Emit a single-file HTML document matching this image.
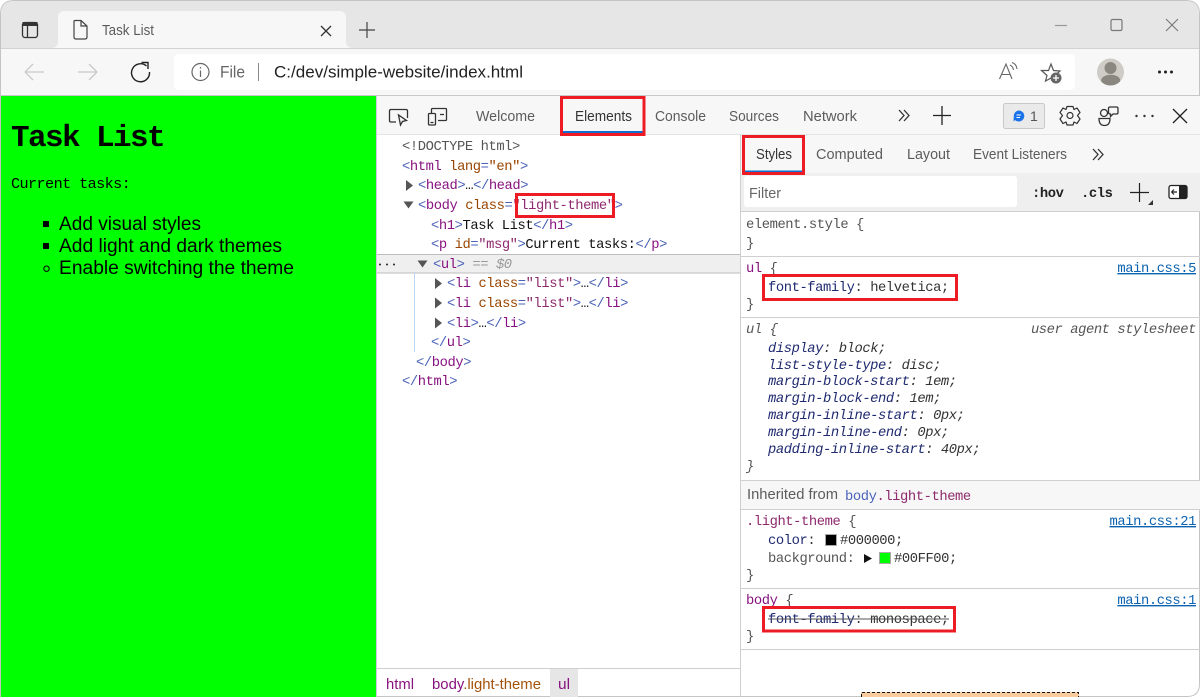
<!DOCTYPE html>
<html lang="en"><head><meta charset="utf-8"><title>Task List</title>
<style>
html,body{margin:0;padding:0;background:#fff;overflow:hidden;width:1200px;height:697px}
svg{display:block}
text{white-space:pre}
.s{font-family:"Liberation Sans",sans-serif;font-size:14.6px;fill:#5c5c5c}
.m{font-family:"Liberation Mono",monospace;font-size:13.8px;letter-spacing:-0.42px;fill:#333}
.t{fill:#881280}.b{fill:#4a62b8}.a{fill:#994500}.v{fill:#8f2a6e}.p{fill:#1f2a70}.g{fill:#555}.k{fill:#111}
.i{font-style:italic}
.l{fill:#0b62b0;text-decoration:underline}
.ic{fill:none;stroke:#333;stroke-width:1.3}
.r{fill:none;stroke:#ed1c24;stroke-width:3}
</style></head><body>
<svg width="1200" height="697" viewBox="0 0 1200 697" xmlns="http://www.w3.org/2000/svg">
<defs><clipPath id="av"><circle cx="1110.500" cy="72" r="13.500"/></clipPath></defs>
<!-- window -->
<path d="M0.5 697V14Q0.5 0.5 14 0.5H1186Q1199.5 0.5 1199.5 14V684Q1199.5 696.5 1187 696.5H0.5Z" fill="#fff" stroke="#c4c4c4"/>
<path d="M1 48V14Q1 1 14 1H1186Q1199 1 1199 14V48Z" fill="#e6e6e6"/>
<rect x="1" y="48" width="1198" height="1" fill="#d2d2d2"/>
<rect x="1" y="49" width="1198" height="46" fill="#f7f7f7"/>
<rect x="0" y="95" width="1200" height="1" fill="#c8c8c8"/>
<!-- tab -->
<path d="M51 48Q58 48 58 41V18Q58 11 65 11H339Q346 11 346 18V41Q346 48 353 48Z" fill="#f7f7f7"/>
<!-- tab strip icon -->
<rect x="22.5" y="22.5" width="15" height="15" rx="2.5" class="ic"/>
<rect x="22.5" y="22" width="15" height="4" fill="#333"/>
<path d="M27.5 26V37" class="ic"/>
<path d="M74 21.5Q74 20.5 75 20.5H81L87 26V37Q87 39 85 39H76Q74 39 74 37ZM81 20.5V26H87" fill="none" stroke="#444" stroke-width="1.2"/>
<text x="102" y="35" class="s" textLength="52" lengthAdjust="spacingAndGlyphs">Task List</text>
<path d="M321 26L331 36M331 26L321 36" class="ic"/>
<path d="M359 30H375M367 22V38" fill="none" stroke="#444" stroke-width="1.2"/>
<!-- window controls -->
<path d="M1055 25.5H1067" stroke="#999" stroke-width="1.2" fill="none"/>
<rect x="1111" y="19.5" width="11" height="11" rx="1.5" fill="none" stroke="#777" stroke-width="1.2"/>
<path d="M1166 19L1178 31M1178 19L1166 31" stroke="#777" stroke-width="1.1" fill="none"/>
<!-- toolbar -->
<path d="M25 72H44M25 72L33 64M25 72L33 80" stroke="#c9c9c9" stroke-width="1.3" fill="none"/>
<path d="M78 72H97M97 72L89 64M97 72L89 80" stroke="#c9c9c9" stroke-width="1.3" fill="none"/>
<path d="M146.5 66A9 9 0 1 0 149.5 72" fill="none" stroke="#222" stroke-width="1.4"/>
<path d="M141.500 62.500H148V69" fill="none" stroke="#222" stroke-width="1.4"/>
<rect x="174" y="54" width="901" height="36" rx="5" fill="#fff"/>
<circle cx="200.500" cy="72" r="8.500" fill="none" stroke="#666" stroke-width="1.200"/>
<path d="M200.500 70.500V77M200.500 67V68.500" stroke="#666" stroke-width="1.200" fill="none"/>
<text x="220" y="77.500" class="s" style="fill:#666;font-size:16.500px" textLength="25" lengthAdjust="spacingAndGlyphs">File</text>
<rect x="258" y="63" width="1" height="18" fill="#888"/>
<text x="274" y="77.500" class="s" style="fill:#222;font-size:16.500px" textLength="249" lengthAdjust="spacingAndGlyphs">C:/dev/simple-website/index.html</text>
<path d="M999.500 79L1006 64L1012 79M1001.500 74.500H1010.500" fill="none" stroke="#666" stroke-width="1.100"/>
<path d="M1010 65Q1013 66.500 1013.500 70M1012 62.500Q1016.500 64 1017 69" fill="none" stroke="#666" stroke-width="1.100"/>
<path d="M1051 64L1053.500 70.500L1060 71L1055 75.500L1056.500 81L1051 78L1045.500 81L1047 75.500L1041.500 70.500L1048.500 70.500Z" fill="none" stroke="#555" stroke-width="1.200"/>
<circle cx="1056" cy="78" r="5.500" fill="#666"/>
<path d="M1053 78H1059M1056 75V81" stroke="#fff" stroke-width="1.300"/>
<circle cx="1110.500" cy="72" r="13.500" fill="#cfccc7"/>
<circle cx="1110.500" cy="68" r="6" fill="#8a8680"/>
<ellipse cx="1110.700" cy="80.500" rx="9.500" ry="5.800" fill="#8a8680" clip-path="url(#av)"/>
<circle cx="1159.500" cy="72" r="1.500" fill="#222"/><circle cx="1165.500" cy="72" r="1.500" fill="#222"/><circle cx="1171.500" cy="72" r="1.500" fill="#222"/>
<!-- page -->
<rect x="1" y="96" width="375" height="601" fill="#00ff00"/>
<text x="11" y="146" style="font-family:'Liberation Mono',monospace;font-weight:bold;font-size:31px;letter-spacing:-1.600px;fill:#000">Task List</text>
<text x="11" y="188" style="font-family:'Liberation Mono',monospace;font-size:15.200px;letter-spacing:-0.600px;fill:#000">Current tasks:</text>
<g style="font-family:'Liberation Sans',sans-serif;font-size:19.3px;fill:#000">
<text x="59" y="230" textLength="142" lengthAdjust="spacingAndGlyphs">Add visual styles</text>
<text x="59" y="252" textLength="223" lengthAdjust="spacingAndGlyphs">Add light and dark themes</text>
<text x="59" y="274" textLength="235" lengthAdjust="spacingAndGlyphs">Enable switching the theme</text>
</g>
<rect x="43" y="221" width="6" height="6" fill="#000"/>
<rect x="43" y="243" width="6" height="6" fill="#000"/>
<circle cx="46.500" cy="268.700" r="2.700" fill="none" stroke="#000" stroke-width="1"/>
<!-- devtools -->
<rect x="376" y="96" width="1" height="601" fill="#d9c6e2"/>
<rect x="377" y="96" width="823" height="38" fill="#f7f7f7"/>
<rect x="377" y="134" width="823" height="1" fill="#e4e4e4"/>
<!-- inspect/device icons -->
<path d="M396 122H391Q389.500 122 389.500 120.500V111Q389.500 109.500 391 109.500H406Q407.500 109.500 407.500 111V118" class="ic"/>
<path d="M398.500 115L400.500 125L402.500 121.500L406.500 120.500Z" class="ic"/>
<rect x="428.500" y="113.500" width="7" height="11.500" rx="1" class="ic"/>
<path d="M431.500 113V109.500Q431.500 108.500 432.500 108.500H445.500Q446.500 108.500 446.500 109.500V119.500Q446.500 120.500 445.500 120.500H438M440 114.500H444M430.500 122.500H433.500" class="ic"/>
<text x="476" y="121" class="s" textLength="59" lengthAdjust="spacingAndGlyphs">Welcome</text>
<text x="575" y="121" class="s" style="fill:#333" textLength="57" lengthAdjust="spacingAndGlyphs">Elements</text>
<text x="655" y="121" class="s" textLength="51" lengthAdjust="spacingAndGlyphs">Console</text>
<text x="729" y="121" class="s" textLength="50" lengthAdjust="spacingAndGlyphs">Sources</text>
<text x="803" y="121" class="s" textLength="54" lengthAdjust="spacingAndGlyphs">Network</text>
<rect x="563" y="131" width="80" height="2" fill="#0f6cd0"/>
<path d="M899 110L904 115.500L899 121M904 110L909 115.500L904 121" class="ic"/>
<path d="M933 115.500H951M942 106V125" fill="none" stroke="#222" stroke-width="1.300"/>
<rect x="1003.500" y="103.500" width="41" height="25" rx="2" fill="#eaeaea" stroke="#c8c8c8"/>
<path d="M1019 110.500A5.500 5.500 0 1 1 1015 120L1013.500 121.500L1013.800 116.500A5.500 5.500 0 0 1 1019 110.500Z" fill="#1a73e8"/>
<path d="M1016.500 115H1021M1016.500 117.500H1020" stroke="#fff" stroke-width="1"/>
<text x="1030" y="121" class="s" style="font-size:14px;fill:#555">1</text>
<path d="M1067 106.500H1073L1074 109.500L1077 108L1080 112.500L1077.500 115.500L1080 119L1077 123.500L1074 122L1073 125H1067L1066 122L1063 123.500L1060 119L1062.500 115.500L1060 112.500L1063 108L1066 109.500Z" fill="none" stroke="#333" stroke-width="1.200" stroke-linejoin="round"/>
<circle cx="1070" cy="115.500" r="3" fill="none" stroke="#333" stroke-width="1.200"/>
<circle cx="1104" cy="113" r="3.500" class="ic"/>
<path d="M1099 118.500H1110Q1110 125.500 1104.500 125.500Q1099 125.500 1099 118.500Z" class="ic"/>
<path d="M1110 107H1116.500Q1118 107 1118 108.500V112.500Q1118 114 1116.500 114H1113L1110.500 116.500V114Q1108.500 114 1108.500 112.500V108.500Q1108.500 107 1110 107Z" class="ic"/>
<circle cx="1136.500" cy="116" r="1.200" fill="#333"/><circle cx="1144.500" cy="116" r="1.200" fill="#333"/><circle cx="1152.500" cy="116" r="1.200" fill="#333"/>
<path d="M1173 109L1187 123M1187 109L1173 123" fill="none" stroke="#222" stroke-width="1.300"/>
<!-- elements panel -->
<rect x="740" y="135" width="1" height="562" fill="#cfcfcf"/>
<text x="402" y="150" class="m g">&lt;!DOCTYPE html&gt;</text>
<text x="402" y="170" class="m"><tspan class="b">&lt;</tspan><tspan class="t">html</tspan> <tspan class="a">lang</tspan><tspan class="b">=</tspan><tspan class="a">"en"</tspan><tspan class="b">&gt;</tspan></text>
<path d="M406 180L413 185.500L406 191Z" fill="#555"/>
<text x="418" y="189" class="m"><tspan class="b">&lt;</tspan><tspan class="t">head</tspan><tspan class="b">&gt;</tspan><tspan class="k">…</tspan><tspan class="b">&lt;/</tspan><tspan class="t">head</tspan><tspan class="b">&gt;</tspan></text>
<path d="M403.500 201.500L413.500 201.500L408.500 208.500Z" fill="#555"/>
<text x="418" y="209" class="m"><tspan class="b">&lt;</tspan><tspan class="t">body</tspan> <tspan class="a">class</tspan><tspan class="b">=</tspan><tspan class="v">"light-theme"</tspan><tspan class="b">&gt;</tspan></text>
<text x="431" y="229" class="m"><tspan class="b">&lt;</tspan><tspan class="t">h1</tspan><tspan class="b">&gt;</tspan><tspan class="k">Task List</tspan><tspan class="b">&lt;/</tspan><tspan class="t">h1</tspan><tspan class="b">&gt;</tspan></text>
<text x="431" y="248" class="m"><tspan class="b">&lt;</tspan><tspan class="t">p</tspan> <tspan class="a">id</tspan><tspan class="b">=</tspan><tspan class="v">"msg"</tspan><tspan class="b">&gt;</tspan><tspan class="k">Current tasks:</tspan><tspan class="b">&lt;/</tspan><tspan class="t">p</tspan><tspan class="b">&gt;</tspan></text>
<rect x="377" y="255" width="363" height="18" fill="#efefef"/>
<rect x="377" y="254" width="363" height="1" fill="#bdbdbd"/>
<rect x="377" y="272.500" width="363" height="1" fill="#bdbdbd"/>
<circle cx="380" cy="264.500" r="1" fill="#222"/><circle cx="387" cy="264.500" r="1" fill="#222"/><circle cx="394" cy="264.500" r="1" fill="#222"/>
<path d="M417.500 260.500L427.500 260.500L422.500 267.500Z" fill="#555"/>
<text x="433" y="268" class="m"><tspan class="b">&lt;</tspan><tspan class="t">ul</tspan><tspan class="b">&gt;</tspan> <tspan class="i" style="fill:#999">== $0</tspan></text>
<rect x="414" y="273" width="1" height="79" fill="#b9d5f2"/>
<path d="M435 278L442 283.500L435 289Z" fill="#555"/>
<text x="447" y="287" class="m"><tspan class="b">&lt;</tspan><tspan class="t">li</tspan> <tspan class="a">class</tspan><tspan class="b">=</tspan><tspan class="v">"list"</tspan><tspan class="b">&gt;</tspan><tspan class="k">…</tspan><tspan class="b">&lt;/</tspan><tspan class="t">li</tspan><tspan class="b">&gt;</tspan></text>
<path d="M435 297.500L442 303L435 308.500Z" fill="#555"/>
<text x="447" y="307" class="m"><tspan class="b">&lt;</tspan><tspan class="t">li</tspan> <tspan class="a">class</tspan><tspan class="b">=</tspan><tspan class="v">"list"</tspan><tspan class="b">&gt;</tspan><tspan class="k">…</tspan><tspan class="b">&lt;/</tspan><tspan class="t">li</tspan><tspan class="b">&gt;</tspan></text>
<path d="M435 317.500L442 323L435 328.500Z" fill="#555"/>
<text x="447" y="327" class="m"><tspan class="b">&lt;</tspan><tspan class="t">li</tspan><tspan class="b">&gt;</tspan><tspan class="k">…</tspan><tspan class="b">&lt;/</tspan><tspan class="t">li</tspan><tspan class="b">&gt;</tspan></text>
<text x="431" y="346" class="m"><tspan class="b">&lt;/</tspan><tspan class="t">ul</tspan><tspan class="b">&gt;</tspan></text>
<text x="416" y="366" class="m"><tspan class="b">&lt;/</tspan><tspan class="t">body</tspan><tspan class="b">&gt;</tspan></text>
<text x="402" y="385" class="m"><tspan class="b">&lt;/</tspan><tspan class="t">html</tspan><tspan class="b">&gt;</tspan></text>
<!-- breadcrumb -->
<rect x="377" y="668" width="363" height="1" fill="#cfcfcf"/>
<rect x="550" y="669" width="28" height="28" fill="#e6e6e6"/>
<text x="386" y="689" class="s t" textLength="28" lengthAdjust="spacingAndGlyphs">html</text>
<text x="432" y="689" class="s" style="fill:#a5520a" textLength="109" lengthAdjust="spacingAndGlyphs"><tspan class="t">body</tspan>.light-theme</text>
<text x="558" y="689" class="s t" textLength="12" lengthAdjust="spacingAndGlyphs">ul</text>
<!-- styles -->
<rect x="741" y="135" width="459" height="38" fill="#f7f7f7"/>
<rect x="741" y="173" width="459" height="38" fill="#efefef"/>
<text x="756" y="159" class="s" style="fill:#333" textLength="36" lengthAdjust="spacingAndGlyphs">Styles</text>
<text x="816" y="159" class="s" textLength="67" lengthAdjust="spacingAndGlyphs">Computed</text>
<text x="907" y="159" class="s" textLength="43" lengthAdjust="spacingAndGlyphs">Layout</text>
<text x="973" y="159" class="s" textLength="94" lengthAdjust="spacingAndGlyphs">Event Listeners</text>
<rect x="745" y="170.500" width="57" height="2" fill="#0f6cd0"/>
<path d="M1093 149L1098 154.500L1093 160M1098 149L1103 154.500L1098 160" class="ic"/>
<rect x="744" y="176" width="273" height="31" rx="3" fill="#fff"/>
<text x="749" y="198" class="s" style="fill:#666" textLength="32" lengthAdjust="spacingAndGlyphs">Filter</text>
<text x="1032" y="197" class="m" style="font-weight:bold;fill:#222">:hov</text>
<text x="1081" y="197" class="m" style="font-weight:bold;fill:#222">.cls</text>
<path d="M1130 192.500H1149M1139.500 183V202" fill="none" stroke="#222" stroke-width="1.200"/>
<path d="M1153 200V205H1148Z" fill="#333"/>
<rect x="1169" y="185.500" width="18" height="13" rx="2" fill="#fff" stroke="#222" stroke-width="1.300"/>
<rect x="1179" y="185.500" width="8" height="13" fill="#222"/>
<path d="M1171.500 192H1177M1171.500 192L1174 189.500M1171.500 192L1174 194.500" stroke="#222" stroke-width="1.200" fill="none"/>
<rect x="741" y="211" width="459" height="1" fill="#cfcfcf"/>
<text x="746" y="228" class="m g">element.style {</text>
<text x="746" y="247" class="m g">}</text>
<rect x="741" y="256" width="459" height="1" fill="#cfcfcf"/>
<text x="746" y="272" class="m g"><tspan class="t">ul</tspan> {</text>
<text x="1196" y="272" class="m l" text-anchor="end">main.css:5</text>
<text x="768" y="291" class="m"><tspan class="p">font-family</tspan>: helvetica;</text>
<text x="746" y="308" class="m g">}</text>
<rect x="741" y="317" width="459" height="1" fill="#cfcfcf"/>
<text x="746" y="333" class="m g i">ul {</text>
<text x="1196" y="333" class="m g i" text-anchor="end">user agent stylesheet</text>
<text x="768" y="352" class="m i"><tspan class="p">display</tspan>: block;</text>
<text x="768" y="369" class="m i"><tspan class="p">list-style-type</tspan>: disc;</text>
<text x="768" y="385" class="m i"><tspan class="p">margin-block-start</tspan>: 1em;</text>
<text x="768" y="402" class="m i"><tspan class="p">margin-block-end</tspan>: 1em;</text>
<text x="768" y="419" class="m i"><tspan class="p">margin-inline-start</tspan>: 0px;</text>
<text x="768" y="436" class="m i"><tspan class="p">margin-inline-end</tspan>: 0px;</text>
<text x="768" y="453" class="m i"><tspan class="p">padding-inline-start</tspan>: 40px;</text>
<text x="746" y="470" class="m g i">}</text>
<rect x="741" y="480" width="459" height="1" fill="#cfcfcf"/>
<rect x="741" y="481" width="459" height="28" fill="#f7f7f7"/>
<text x="747" y="499" class="s" textLength="91" lengthAdjust="spacingAndGlyphs">Inherited from</text>
<text x="845" y="500" class="m"><tspan class="b">body</tspan><tspan class="v">.light-theme</tspan></text>
<rect x="741" y="509" width="459" height="1" fill="#cfcfcf"/>
<text x="746" y="525" class="m g"><tspan class="v">.light-theme</tspan> {</text>
<text x="1196" y="525" class="m l" text-anchor="end">main.css:21</text>
<text x="768" y="544" class="m"><tspan class="p">color</tspan>:</text>
<rect x="825.500" y="534.500" width="11" height="11" fill="#000" stroke="#aaa"/>
<text x="840" y="544" class="m">#000000;</text>
<text x="768" y="562" class="m g">background:</text>
<path d="M864 554L872 558.500L864 563Z" fill="#111"/>
<rect x="879.500" y="552.500" width="11" height="11" fill="#00ff00" stroke="#aaa"/>
<text x="894" y="562" class="m">#00FF00;</text>
<text x="746" y="579" class="m g">}</text>
<rect x="741" y="588" width="459" height="1" fill="#cfcfcf"/>
<text x="746" y="604" class="m g"><tspan class="t">body</tspan> {</text>
<text x="1196" y="604" class="m l" text-anchor="end">main.css:1</text>
<text x="768" y="623" class="m"><tspan class="p">font-family</tspan>: monospace;</text>
<rect x="768" y="618.500" width="181" height="1" fill="#555"/>
<text x="746" y="640" class="m g">}</text>
<rect x="741" y="649" width="459" height="1" fill="#cfcfcf"/>
<rect x="861" y="692" width="218" height="5" fill="#f9cc9d"/>
<path d="M861.500 697V692.500H1078.500V697" fill="none" stroke="#111" stroke-width="1" stroke-dasharray="3 2"/>
<!-- red annotation boxes -->
<rect x="561.500" y="97.500" width="82.500" height="37" class="r"/>
<rect x="743.500" y="136.500" width="60" height="37" class="r"/>
<rect x="516.500" y="194.500" width="97" height="22" class="r"/>
<rect x="763.500" y="275.500" width="193" height="24" class="r"/>
<rect x="763.500" y="607.500" width="191" height="23.500" class="r"/>
</svg>
</body></html>
